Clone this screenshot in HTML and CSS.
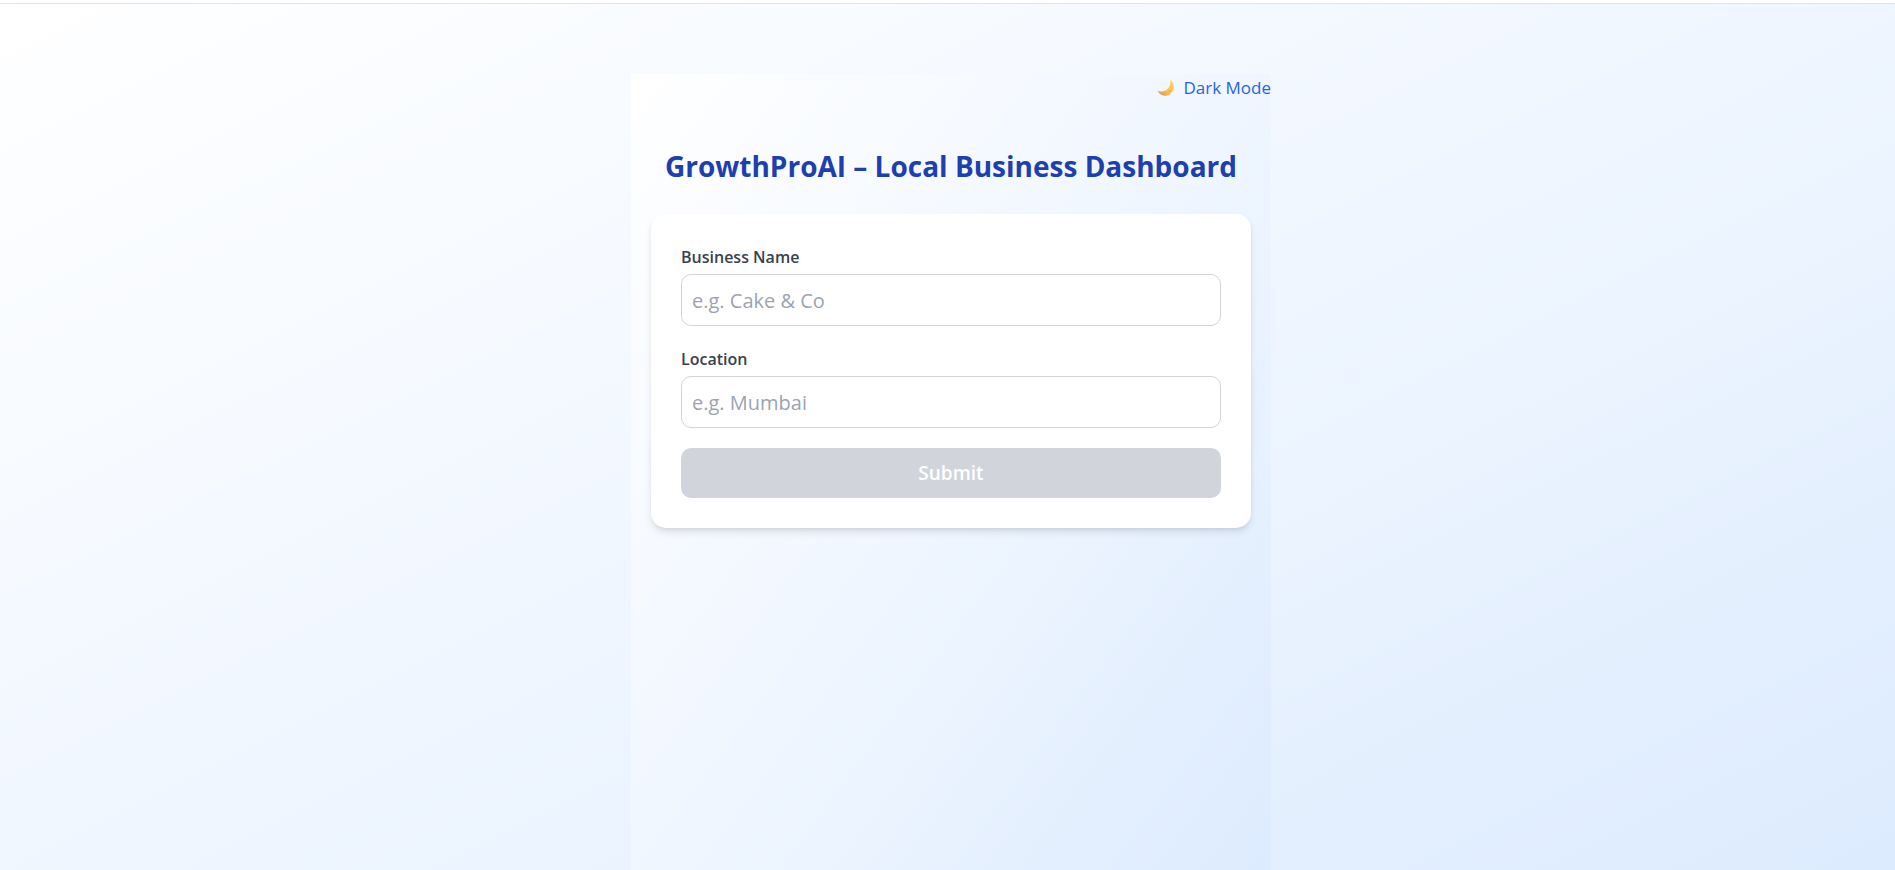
FILE: index.html
```html
<!DOCTYPE html>
<html lang="en">
<head>
<meta charset="utf-8">
<title>GrowthProAI</title>
<link rel="stylesheet" href="styles.css">
</head>
<body>
<div class="page">
  <main class="panel">
    <div class="toolbar">
      <button class="theme-toggle" type="button">
        <svg class="moon" viewBox="0 0 18 18" aria-hidden="true">
          <defs>
            <linearGradient id="moon-fill" x1="1" y1="0" x2="0" y2="1">
              <stop offset="0" stop-color="#ffd662"/>
              <stop offset="0.55" stop-color="#fbbf56"/>
              <stop offset="1" stop-color="#ee8d55"/>
            </linearGradient>
          </defs>
          <path fill="url(#moon-fill)" d="M13.2 1C16.2 3 17.6 6.400 16.600 10C15.400 14.500 11.500 17.200 7.300 16.800C4.300 16.500 1.900 14.700.8 11.800C3.500 12.900 7 12.700 9.600 10.800C12.700 8.500 13.900 4.800 13.200 1Z"/>
          <circle cx="12.500" cy="12" r="1" fill="#f0a548"/>
          <circle cx="7" cy="14.800" r="0.800" fill="#e98a4c"/>
          <circle cx="14.900" cy="8" r="0.700" fill="#f3b14b"/>
        </svg>
        <span>Dark Mode</span>
      </button>
    </div>
    <h1 class="title">GrowthProAI – Local Business Dashboard</h1>
    <form class="card">
      <div class="field">
        <label class="label" for="business-name">Business Name</label>
        <input class="input" id="business-name" type="text" placeholder="e.g. Cake &amp; Co">
      </div>
      <div class="field">
        <label class="label" for="location">Location</label>
        <input class="input" id="location" type="text" placeholder="e.g. Mumbai">
      </div>
      <button class="submit" type="submit" disabled>Submit</button>
    </form>
  </main>
</div>
</body>
</html>
```
FILE: styles.css
```css
*,
*::before,
*::after {
  box-sizing: border-box;
}

html {
  height: 100%;
  overflow: hidden;
}

body {
  margin: 0;
  padding-top: 3px;
  background: #ffffff;
  font-family: "Open Sans", "Noto Sans", sans-serif;
  color: #374151;
}

button,
input {
  font: inherit;
}

.page {
  display: flex;
  flex-direction: column;
  align-items: center;
  padding: 70px 0 0 7px;
  border-top: 1px solid #e2e3e6;
  background: linear-gradient(to bottom right, #ffffff, #eff6ff, #dbeafe);
}

.panel {
  width: 100%;
  max-width: 640px;
  min-height: 100vh;
  background: linear-gradient(to bottom right, #ffffff, #eff6ff, #dbeafe);
}

.toolbar {
  display: flex;
  justify-content: flex-end;
}

.theme-toggle {
  display: flex;
  align-items: center;
  gap: 8px;
  padding: 0;
  border: 0;
  background: none;
  color: #2563eb;
  font-size: 17px;
  line-height: 28px;
  cursor: pointer;
}

.moon {
  width: 18px;
  height: 18px;
}

.title {
  margin: 44px 20px 28px;
  color: #1e40af;
  font-size: 28px;
  font-weight: 700;
  line-height: 40px;
  text-align: center;
}

.card {
  display: flex;
  flex-direction: column;
  gap: 20px;
  margin: 0 20px;
  padding: 30px;
  border-radius: 15px;
  background: #ffffff;
  box-shadow: 0 5px 8px -1px rgba(0, 0, 0, 0.1), 0 2px 5px -2px rgba(0, 0, 0, 0.1);
}

.field {
  display: flex;
  flex-direction: column;
  gap: 4px;
}

.label {
  font-size: 16px;
  font-weight: 600;
  line-height: 26px;
}

.input {
  width: 100%;
  height: 52px;
  padding: 0 10px;
  border: 1px solid #d1d5db;
  border-radius: 10px;
  background: #ffffff;
  color: #374151;
  font-size: 20px;
}

.input::placeholder {
  color: #9ca3af;
  opacity: 1;
}

.submit {
  height: 50px;
  border: 0;
  border-radius: 10px;
  background: #d1d5db;
  color: #ffffff;
  font-size: 19px;
  font-weight: 600;
}
```
